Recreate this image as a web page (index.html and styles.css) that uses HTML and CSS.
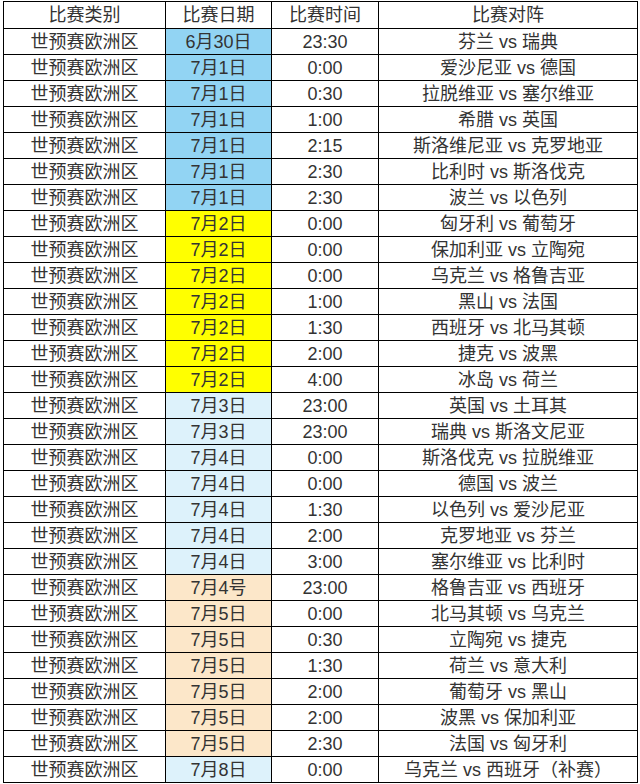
FILE: index.html
```html
<!DOCTYPE html>
<html lang="zh">
<head>
<meta charset="utf-8">
<link rel="stylesheet" href="styles.css">
</head>
<body>
<div class="wrap">
<table class="sched">
<colgroup><col class="c1"><col class="c2"><col class="c3"><col class="c4"></colgroup>
<thead>
<tr><th>比赛类别</th><th>比赛日期</th><th>比赛时间</th><th>比赛对阵</th></tr>
</thead>
<tbody>
<tr><td>世预赛欧洲区</td><td class="d-blue">6月30日</td><td>23:30</td><td>芬兰 vs 瑞典</td></tr>
<tr><td>世预赛欧洲区</td><td class="d-blue">7月1日</td><td>0:00</td><td>爱沙尼亚 vs 德国</td></tr>
<tr><td>世预赛欧洲区</td><td class="d-blue">7月1日</td><td>0:30</td><td>拉脱维亚 vs 塞尔维亚</td></tr>
<tr><td>世预赛欧洲区</td><td class="d-blue">7月1日</td><td>1:00</td><td>希腊 vs 英国</td></tr>
<tr><td>世预赛欧洲区</td><td class="d-blue">7月1日</td><td>2:15</td><td>斯洛维尼亚 vs 克罗地亚</td></tr>
<tr><td>世预赛欧洲区</td><td class="d-blue">7月1日</td><td>2:30</td><td>比利时 vs 斯洛伐克</td></tr>
<tr><td>世预赛欧洲区</td><td class="d-blue">7月1日</td><td>2:30</td><td>波兰 vs 以色列</td></tr>
<tr><td>世预赛欧洲区</td><td class="d-yellow">7月2日</td><td>0:00</td><td>匈牙利 vs 葡萄牙</td></tr>
<tr><td>世预赛欧洲区</td><td class="d-yellow">7月2日</td><td>0:00</td><td>保加利亚 vs 立陶宛</td></tr>
<tr><td>世预赛欧洲区</td><td class="d-yellow">7月2日</td><td>0:00</td><td>乌克兰 vs 格鲁吉亚</td></tr>
<tr><td>世预赛欧洲区</td><td class="d-yellow">7月2日</td><td>1:00</td><td>黑山 vs 法国</td></tr>
<tr><td>世预赛欧洲区</td><td class="d-yellow">7月2日</td><td>1:30</td><td>西班牙 vs 北马其顿</td></tr>
<tr><td>世预赛欧洲区</td><td class="d-yellow">7月2日</td><td>2:00</td><td>捷克 vs 波黑</td></tr>
<tr><td>世预赛欧洲区</td><td class="d-yellow">7月2日</td><td>4:00</td><td>冰岛 vs 荷兰</td></tr>
<tr><td>世预赛欧洲区</td><td class="d-light">7月3日</td><td>23:00</td><td>英国 vs 土耳其</td></tr>
<tr><td>世预赛欧洲区</td><td class="d-light">7月3日</td><td>23:00</td><td>瑞典 vs 斯洛文尼亚</td></tr>
<tr><td>世预赛欧洲区</td><td class="d-light">7月4日</td><td>0:00</td><td>斯洛伐克 vs 拉脱维亚</td></tr>
<tr><td>世预赛欧洲区</td><td class="d-light">7月4日</td><td>0:00</td><td>德国 vs 波兰</td></tr>
<tr><td>世预赛欧洲区</td><td class="d-light">7月4日</td><td>1:30</td><td>以色列 vs 爱沙尼亚</td></tr>
<tr><td>世预赛欧洲区</td><td class="d-light">7月4日</td><td>2:00</td><td>克罗地亚 vs 芬兰</td></tr>
<tr><td>世预赛欧洲区</td><td class="d-light">7月4日</td><td>3:00</td><td>塞尔维亚 vs 比利时</td></tr>
<tr><td>世预赛欧洲区</td><td class="d-peach">7月4号</td><td>23:00</td><td>格鲁吉亚 vs 西班牙</td></tr>
<tr><td>世预赛欧洲区</td><td class="d-peach">7月5日</td><td>0:00</td><td>北马其顿 vs 乌克兰</td></tr>
<tr><td>世预赛欧洲区</td><td class="d-peach">7月5日</td><td>0:30</td><td>立陶宛 vs 捷克</td></tr>
<tr><td>世预赛欧洲区</td><td class="d-peach">7月5日</td><td>1:30</td><td>荷兰 vs 意大利</td></tr>
<tr><td>世预赛欧洲区</td><td class="d-peach">7月5日</td><td>2:00</td><td>葡萄牙 vs 黑山</td></tr>
<tr><td>世预赛欧洲区</td><td class="d-peach">7月5日</td><td>2:00</td><td>波黑 vs 保加利亚</td></tr>
<tr><td>世预赛欧洲区</td><td class="d-peach">7月5日</td><td>2:30</td><td>法国 vs 匈牙利</td></tr>
<tr><td>世预赛欧洲区</td><td class="d-light">7月8日</td><td>0:00</td><td>乌克兰 vs 西班牙（补赛）</td></tr>
</tbody>
</table>
</div>
</body>
</html>
```
FILE: styles.css
```css
html, body {
  margin: 0;
  padding: 0;
  background: #ffffff;
}
.wrap {
  padding: 1px 0 0 3px;
}
.sched {
  border-collapse: collapse;
  table-layout: fixed;
  width: 634px;
  font-family: "Liberation Sans", "Noto Sans CJK SC", sans-serif;
  font-size: 18px;
  color: #333333;
}
.c1 { width: 162px; }
.c2 { width: 106px; }
.c3 { width: 107px; }
.c4 { width: 259px; }
.sched th, .sched td {
  border: 1px solid #000000;
  padding: 0;
  text-align: center;
  vertical-align: middle;
  font-weight: normal;
  line-height: 20px;
  white-space: nowrap;
  overflow: hidden;
}
.sched thead tr { height: 27px; }
.sched tbody tr { height: 26px; }
.d-blue { background: #92d4f3; }
.d-yellow { background: #ffff00; }
.d-light { background: #ddf2fb; }
.d-peach { background: #fce7c9; }
```
